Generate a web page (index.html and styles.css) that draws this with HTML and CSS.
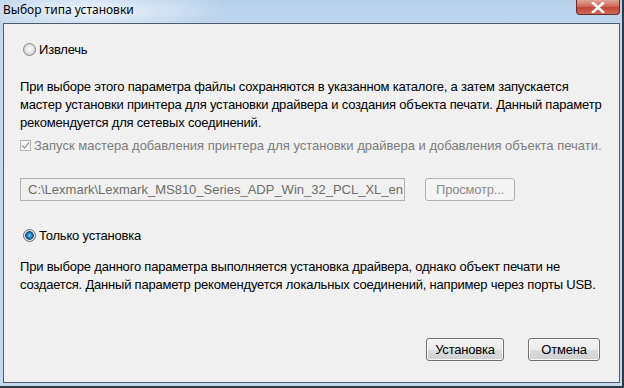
FILE: index.html
```html
<!DOCTYPE html>
<html lang="ru">
  <head>
    <meta charset="utf-8">
    <title>Выбор типа установки</title>
    <link rel="stylesheet" href="styles.css">
  </head>
  <body>
    <div class="window">
      <div class="titlebar">
        <span class="title">Выбор типа установки</span>
        <span class="close">
          <svg width="14" height="11" viewBox="0 0 14 11"><path d="M2 1 L12 10 M12 1 L2 10" stroke="#fff" stroke-width="2.6" stroke-linecap="square"/></svg>
        </span>
      </div>
      <div class="client">
        <div class="option">
          <span class="radio"></span>
          <span>Извлечь</span>
        </div>
        <p class="note">При выборе этого параметра файлы сохраняются в указанном каталоге, а затем запускается<br>
          мастер установки принтера для установки драйвера и создания объекта печати. Данный параметр<br>
          рекомендуется для сетевых соединений.</p>
        <div class="check disabled">
          <span class="box">
            <svg width="9" height="9" viewBox="0 0 9 9"><path d="M1 4.5 L3.5 7 L8 1.5" fill="none" stroke="#a0a0a0" stroke-width="1.3"/></svg>
          </span>
          <span>Запуск мастера добавления принтера для установки драйвера и добавления объекта печати.</span>
        </div>
        <div class="path-row">
          <div class="field">C:\Lexmark\Lexmark_MS810_Series_ADP_Win_32_PCL_XL_en</div>
          <span class="btn off">Просмотр...</span>
        </div>
        <div class="option second">
          <span class="radio on"></span>
          <span>Только установка</span>
        </div>
        <p class="note last">При выборе данного параметра выполняется установка драйвера, однако объект печати не<br>
          создается. Данный параметр рекомендуется локальных соединений, например через порты USB.</p>
        <div class="actions">
          <span class="btn install">Установка</span>
          <span class="btn">Отмена</span>
        </div>
      </div>
    </div>
  </body>
</html>
```
FILE: styles.css
```css
html, body {
    margin: 0;
    width: 624px;
    height: 388px;
    overflow: hidden;
    background: #2f3a45;
    font-family: 'Liberation Sans', Arial, sans-serif;
}

.window {
    width: 622px;
    height: 386px;
    box-sizing: border-box;
    padding: 0 2px 3px 3px;
    background: linear-gradient(to bottom, #b7d0ea, #c3d8ee 40px, #c5d9ee);
    display: flex;
    flex-direction: column;
}

.titlebar {
    height: 23px;
    flex: none;
    display: flex;
    justify-content: space-between;
    align-items: flex-start;
    background: radial-gradient(ellipse 140px 22px at 90px 10px, rgba(255,255,255,.75), rgba(255,255,255,0));
    margin-left: -3px;
    padding-left: 3px;
}
.title {
    font-family: 'Noto Sans', sans-serif;
    font-size: 12px;
    line-height: 20px;
    color: #000;
}
.close {
    width: 44px;
    height: 15px;
    box-sizing: border-box;
    border: 1px solid #6b2b2b;
    border-top: 0;
    border-radius: 0 0 4px 4px;
    background: linear-gradient(to bottom, #e0a395, #d06a5b 45%, #c44535 55%, #d06a5a);
    display: flex;
    align-items: center;
    justify-content: center;
}

.client {
    flex: 1;
    background: #f0f0f0;
    border: 1px solid #4f5b69;
    padding: 16px 16px 0 16px;
    font-size: 13px;
    color: #000;
    display: flex;
    flex-direction: column;
    letter-spacing: -0.2px;
}

.option {
    display: flex;
    align-items: center;
    gap: 3px;
    height: 18px;
    padding-left: 3px;
}
.option.second {
    margin-top: 25px;
}
.radio {
    width: 11px;
    height: 11px;
    border-radius: 50%;
    border: 1px solid #8a8a8a;
    background: radial-gradient(circle at 50% 45%, #ffffff, #dcdcdc 60%, #bdbdbd);
}
.radio.on {
    background: radial-gradient(circle at 50% 50%, #7fd0f5 0, #1a79b8 2.5px, #0f4e80 4px, #e6e6e6 4.6px, #f6f6f6 100%);
    border-color: #6c6c6c;
}

.note {
    margin: 20px 0 0 0;
    line-height: 18px;
}
.note.last {
    margin-top: 14px;
}

.check {
    display: flex;
    align-items: center;
    gap: 3px;
    margin-top: 4px;
    height: 18px;
    letter-spacing: 0;
}
.check.disabled {
    color: #7c7c7c;
}
.box {
    width: 9px;
    height: 9px;
    border: 1px solid #b5b5b5;
    background: #f4f4f4;
    display: flex;
    align-items: center;
    justify-content: center;
}

.path-row {
    display: flex;
    align-items: center;
    gap: 20px;
    margin-top: 24px;
}
.field {
    width: 385px;
    height: 23px;
    box-sizing: border-box;
    border: 1px solid #b2b2b2;
    background: #f0f0f0;
    color: #6d6d6d;
    line-height: 21px;
    padding-left: 7px;
    white-space: nowrap;
    overflow: hidden;
    letter-spacing: 0;
}

.btn {
    display: inline-flex;
    align-items: center;
    justify-content: center;
    width: 72px;
    height: 23px;
    box-sizing: border-box;
    border: 1px solid #707070;
    border-radius: 3px;
    background: linear-gradient(to bottom, #f3f3f3, #ebebeb 50%, #dddddd 50%, #cfcfcf);
    box-shadow: inset 0 0 0 1px #fbfbfb;
    font-size: 13px;
}
.btn.off {
    width: 90px;
    border-color: #adb2b5;
    background: #f4f4f4;
    box-shadow: none;
    color: #8d8d8d;
}
.btn.install {
    width: 78px;
}

.actions {
    margin-top: auto;
    margin-bottom: 21px;
    display: flex;
    justify-content: flex-end;
    gap: 24px;
    padding-right: 3px;
}
```
